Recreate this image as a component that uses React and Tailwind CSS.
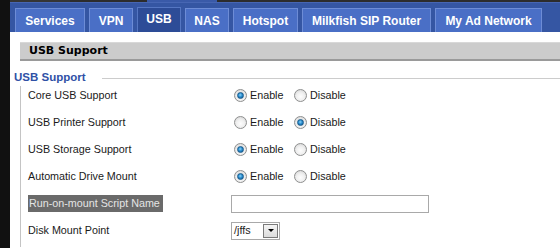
import React from "react";

const tabs = [
  { t: "Services", w: "w-[70px]" },
  { t: "VPN", w: "w-[44px]" },
  { t: "USB", w: "w-[44px]", active: true },
  { t: "NAS", w: "w-[44px]" },
  { t: "Hotspot", w: "w-[65px]" },
  { t: "Milkfish SIP Router", w: "w-[129px]" },
  { t: "My Ad Network", w: "w-[107px]" },
];

function Radio({ checked }) {
  return (
    <span className="relative inline-flex h-[13px] w-[13px] shrink-0 items-center justify-center rounded-full border border-[#8e8f8f] bg-[radial-gradient(circle_at_50%_60%,#fdfdfd_0%,#f0f0f0_45%,#cfcfcf_100%)]">
      {checked && (
        <span className="h-[7px] w-[7px] rounded-full border border-[#1b5c8c] bg-[radial-gradient(circle_at_45%_40%,#8fd3f7_0%,#2b8fd0_45%,#0a4e8a_100%)]" />
      )}
    </span>
  );
}

function RadioPair({ value }) {
  return (
    <div className="flex items-center pl-[3px]">
      <Radio checked={value === "enable"} />
      <span className="ml-[3px] w-[44px]">Enable</span>
      <Radio checked={value === "disable"} />
      <span className="ml-[3px]">Disable</span>
    </div>
  );
}

function Row({ label, highlight, children }) {
  return (
    <div className="flex h-[17px] items-center">
      <div className="w-[203px] shrink-0">
        <span
          className={
            highlight
              ? "inline-flex h-[17px] items-center bg-[#6a6a6a] pl-[1px] pr-[3px] text-[#e4e4e4]"
              : ""
          }
        >
          {label}
        </span>
      </div>
      {children}
    </div>
  );
}

export default function App() {
  return (
    <div className="flex h-[248px] w-[560px] overflow-hidden bg-white">
      <div className="w-[10px] shrink-0 bg-[#111111]" />
      <div className="flex min-w-0 flex-1 flex-col">
        <div className="flex h-[2px] bg-[#2c2c2c]">
          <div className="w-[60px] bg-[#353535]" />
          <div className="w-[77px]" />
          <div className="w-[70px] bg-[#3a5aa8]" />
        </div>
        <div className="flex h-[30px] items-end gap-[4px] border-t border-[#4766b3] bg-[#3556a3] pl-[5px] font-['Liberation_Sans',Arial,sans-serif] text-[12px] font-bold text-white">
          {tabs.map((tab) => (
            <div
              key={tab.t}
              className={
                tab.active
                  ? `${tab.w} flex h-[25px] items-center justify-center border border-b-0 border-[#5576c2] bg-[#2d4c97] pb-[2px]`
                  : `${tab.w} flex h-[24px] items-center justify-center border border-b-0 border-[#6d8cd6] bg-[#4a6fc6]`
              }
            >
              {tab.t}
            </div>
          ))}
        </div>
        <div className="flex flex-1 flex-col">
          <div className="ml-[10px] mt-[10px] flex h-[19px] items-center border-t border-b-2 border-t-[#d8d8d8] border-b-[#9a9a9a] bg-[#cccccc] pl-[9px] font-['DejaVu_Sans',Verdana,sans-serif] text-[11px] font-bold text-black">
            USB Support
          </div>
          <div className="mt-[10px] flex h-[14px] items-center pl-[4px]">
            <span className="font-['Liberation_Sans',Arial,sans-serif] text-[11.5px] font-bold text-[#2f51a6]">
              USB Support
            </span>
            <div className="ml-[16px] h-px flex-1 bg-[#cccccc]" />
          </div>
          <div className="ml-[10px] mt-[1px] flex flex-col gap-[10px] border-l border-[#c4c4c4] pb-[8px] pl-[7px] pt-[1px] font-['Liberation_Sans',Arial,sans-serif] text-[10.75px] text-[#1a1a1a]">
            <Row label="Core USB Support">
              <RadioPair value="enable" />
            </Row>
            <Row label="USB Printer Support">
              <RadioPair value="disable" />
            </Row>
            <Row label="USB Storage Support">
              <RadioPair value="enable" />
            </Row>
            <Row label="Automatic Drive Mount">
              <RadioPair value="enable" />
            </Row>
            <Row label="Run-on-mount Script Name" highlight>
              <div className="mt-[1px] h-[18px] w-[198px] border border-[#a9a9a9] bg-white" />
            </Row>
            <Row label="Disk Mount Point">
              <div className="flex h-[18px] w-[49px] items-center border border-[#a9a9a9] bg-white">
                <span className="ml-[2px] flex-1">/jffs</span>
                <span className="mr-[1px] flex h-[14px] w-[15px] items-center justify-center border border-[#7a7a7a] bg-[linear-gradient(#f4f4f4,#dcdcdc)]">
                  <span className="h-0 w-0 border-x-[3px] border-t-[3px] border-x-transparent border-t-black" />
                </span>
              </div>
            </Row>
          </div>
        </div>
      </div>
    </div>
  );
}
